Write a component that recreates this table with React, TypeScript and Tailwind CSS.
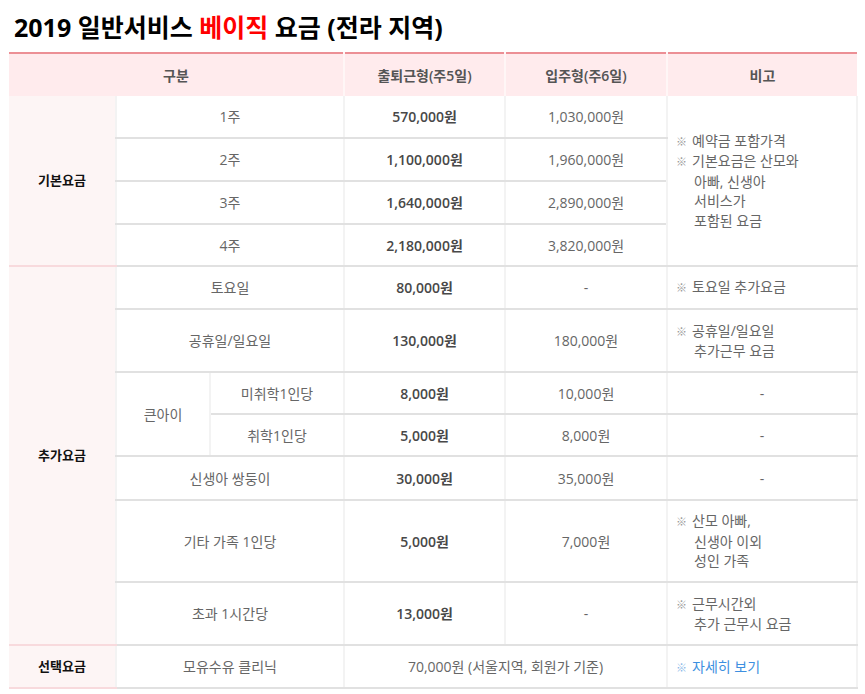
import type { ReactNode } from 'react'

const FONT = "font-['Open_Sans','Noto_Sans_CJK_KR',sans-serif]"

type Row = {
  group?: { label: string; span: number }
  sub?: { label: string; span: number }
  item: string
  itemSpan: 1 | 2
  commute: string
  live: string
  note?: { lines: string[]; span: number } | 'dash'
  h: number
}

const ROWS: Row[] = [
  { group: { label: '기본요금', span: 4 }, item: '1주', itemSpan: 2, commute: '570,000원', live: '1,030,000원', note: { lines: ['예약금 포함가격', '*기본요금은 산모와', '아빠, 신생아', '서비스가', '포함된 요금'], span: 4 }, h: 42 },
  { item: '2주', itemSpan: 2, commute: '1,100,000원', live: '1,960,000원', h: 43 },
  { item: '3주', itemSpan: 2, commute: '1,640,000원', live: '2,890,000원', h: 43 },
  { item: '4주', itemSpan: 2, commute: '2,180,000원', live: '3,820,000원', h: 42 },
  { group: { label: '추가요금', span: 7 }, item: '토요일', itemSpan: 2, commute: '80,000원', live: '-', note: { lines: ['토요일 추가요금'], span: 1 }, h: 43 },
  { item: '공휴일/일요일', itemSpan: 2, commute: '130,000원', live: '180,000원', note: { lines: ['공휴일/일요일', '추가근무 요금'], span: 1 }, h: 63 },
  { sub: { label: '큰아이', span: 2 }, item: '미취학1인당', itemSpan: 1, commute: '8,000원', live: '10,000원', note: 'dash', h: 42 },
  { item: '취학1인당', itemSpan: 1, commute: '5,000원', live: '8,000원', note: 'dash', h: 42 },
  { item: '신생아 쌍둥이', itemSpan: 2, commute: '30,000원', live: '35,000원', note: 'dash', h: 44 },
  { item: '기타 가족 1인당', itemSpan: 2, commute: '5,000원', live: '7,000원', note: { lines: ['산모 아빠,', '신생아 이외', '성인 가족'], span: 1 }, h: 82 },
  { item: '초과 1시간당', itemSpan: 2, commute: '13,000원', live: '-', note: { lines: ['근무시간외', '추가 근무시 요금'], span: 1 }, h: 63 },
]

const cell = 'border-b-2 border-b-[#e1e1e1] border-x-2 border-x-[#f3f3f3] text-center align-middle'
const groupCell = 'border-b-2 border-b-[#f8dadd] bg-[#fdf5f5] text-center align-middle text-[13px] font-bold text-[#111]'

function Note({ lines }: { lines: string[] }) {
  // lines starting with '*' begin a new ※ bullet; first line is always a bullet
  const out: ReactNode[] = []
  lines.forEach((raw, i) => {
    const bullet = i === 0 || raw.startsWith('*')
    const text = raw.replace(/^\*/, '')
    out.push(
      <div key={i} className={bullet ? '' : 'pl-[18px]'}>
        {bullet ? <span className="mr-[5px] text-[11px] text-[#999]">※</span> : null}
        {text}
      </div>,
    )
  })
  return <div className="px-2 text-left leading-[19.5px]">{out}</div>
}

export default function App() {
  return (
    <div className={`${FONT} h-[694px] w-[865px] bg-white`}>
      <h1 className="pl-[14px] pt-[11px] text-[25px] font-bold leading-[32px] text-black">
        2019 일반서비스 <span className="text-[#ff0000]">베이직</span> 요금 (전라 지역)
      </h1>

      <table className="ml-[9px] mt-[9px] w-[848px] table-fixed border-collapse text-[14px] text-[#666]">
        <colgroup>
          <col className="w-[107px]" />
          <col className="w-[94px]" />
          <col className="w-[134px]" />
          <col className="w-[161px]" />
          <col className="w-[162px]" />
          <col className="w-[190px]" />
        </colgroup>
        <thead>
          <tr className="h-[43px] border-t-2 border-t-[#ec8f95] bg-[#ffebed]">
            <th colSpan={3} className="border-r-2 border-r-[#fff6f6] font-semibold text-[#555]">구분</th>
            <th className="border-r-2 border-r-[#fff6f6] font-semibold text-[#555]">출퇴근형(주5일)</th>
            <th className="border-r-2 border-r-[#fff6f6] font-semibold text-[#555]">입주형(주6일)</th>
            <th className="font-semibold text-[#555]">비고</th>
          </tr>
        </thead>
        <tbody>
          {ROWS.map((r, i) => (
            <tr key={i} style={{ height: r.h }}>
              {r.group ? (
                <td rowSpan={r.group.span} className={groupCell}>
                  {r.group.label}
                </td>
              ) : null}
              {r.sub ? (
                <td rowSpan={r.sub.span} className={cell}>
                  {r.sub.label}
                </td>
              ) : null}
              <td colSpan={r.itemSpan} className={cell}>
                {r.item}
              </td>
              <td className={`${cell} font-semibold text-[#484848]`}>{r.commute}</td>
              <td className={cell}>{r.live}</td>
              {r.note === 'dash' ? (
                <td className={cell}>-</td>
              ) : r.note ? (
                <td rowSpan={r.note.span} className={`${cell} text-left`}>
                  <Note lines={r.note.lines} />
                </td>
              ) : null}
            </tr>
          ))}
          <tr className="h-[43px]">
            <td className={groupCell}>선택요금</td>
            <td colSpan={2} className={cell}>
              모유수유 클리닉
            </td>
            <td colSpan={2} className={cell}>
              70,000원 (서울지역, 회원가 기준)
            </td>
            <td className={`${cell} text-left`}>
              <div className="px-2 text-[#3d8fe0]">
                <span className="mr-[5px] text-[11px] text-[#8ab8e8]">※</span>자세히 보기
              </div>
            </td>
          </tr>
        </tbody>
      </table>
    </div>
  )
}
